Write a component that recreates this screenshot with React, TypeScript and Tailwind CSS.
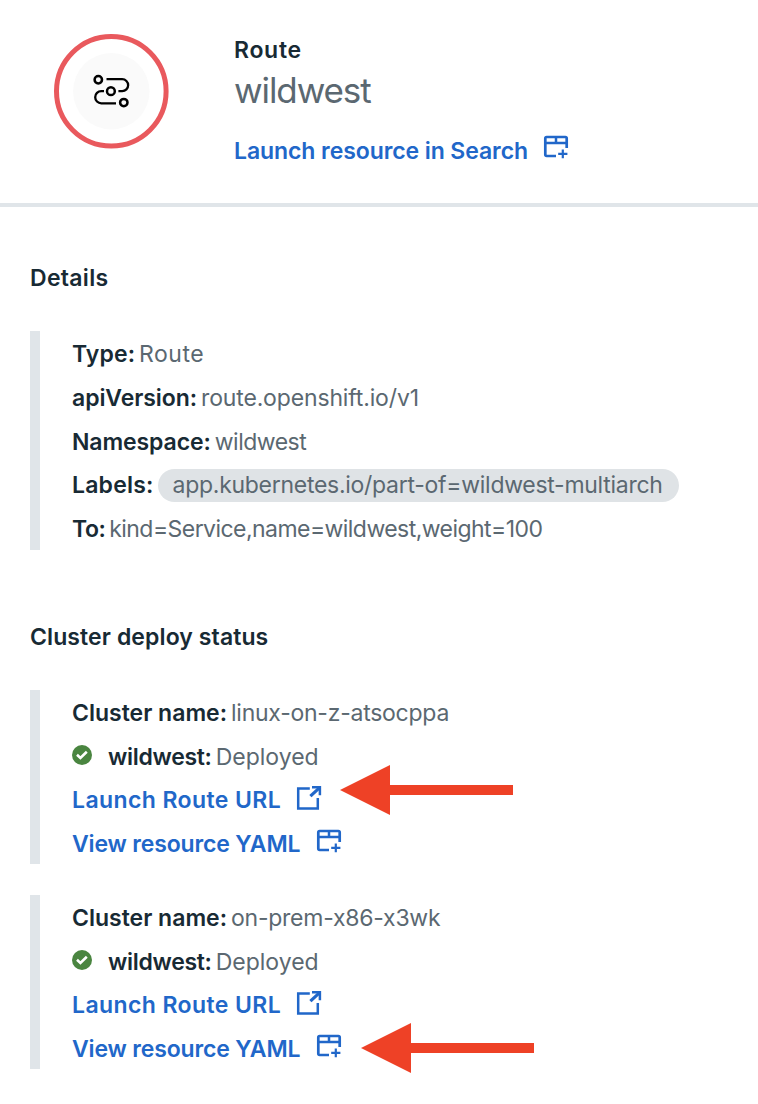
import type { ReactNode } from "react";

function RouteIcon() {
  return (
    <svg className="size-[115px]" viewBox="0 0 115 115" fill="none">
      <circle cx="57.3" cy="57.3" r="54.8" fill="#fff" stroke="#e9595d" strokeWidth="5" />
      <circle cx="57.3" cy="57.3" r="38.2" fill="#fafafa" />
      <g stroke="#000" strokeWidth="2.5">
        <circle cx="44.3" cy="45.7" r="3.7" />
        <circle cx="56.9" cy="57.2" r="3.9" />
        <circle cx="69.8" cy="68.6" r="3.7" />
        <path d="M52.5 45.2H68.2a5.9 5.9 0 0 1 0 11.9H64.4" strokeWidth="2.3" />
        <path d="M50 57.1H47.3a6.1 6.1 0 0 0 0 12.2H62" strokeWidth="2.3" />
      </g>
    </svg>
  );
}

function ResourceIcon() {
  return (
    <svg className="h-6 w-[26px] shrink-0" viewBox="0 0 26 24" fill="none" stroke="#2167c9">
      <path d="M23.7 12.9V3.4Q23.7 2 22.3 2H3.7Q2.3 2 2.3 3.4V19.6Q2.3 21 3.7 21H13" strokeWidth="2.7" />
      <path d="M2 7.9H24M13 2V7.9" strokeWidth="2.5" />
      <path d="M15.2 18.9H24.4M19.8 14.4V23.3" strokeWidth="2.2" />
    </svg>
  );
}

function LaunchIcon() {
  return (
    <svg className="h-[26px] w-[26px] shrink-0" viewBox="0 0 26 26" fill="none" stroke="#2167c9">
      <path d="M13.8 3.6H2.2V23.5H21.8V13" strokeWidth="2.5" />
      <path d="M16 2.3H23.9V10.2" strokeWidth="2.5" />
      <path d="M23.4 2.8L14.4 11.2" strokeWidth="3.2" />
    </svg>
  );
}

function CheckIcon() {
  return (
    <svg className="relative -top-[2px] mr-4 size-5 shrink-0" viewBox="0 0 20 20" fill="none">
      <circle cx="10" cy="10" r="10" fill="#4a8540" />
      <path d="M5 9.8L8.4 12.9L14.8 6.7" stroke="#fff" strokeWidth="2.6" />
    </svg>
  );
}

function Row({ children }: { children: ReactNode }) {
  return <div className="flex h-[43.7px] shrink-0 items-center">{children}</div>;
}

function Label({ className, children }: { className: string; children: ReactNode }) {
  return <span className={`mr-[4px] font-semibold text-[#182a34] ${className}`}>{children}</span>;
}

function Arrow() {
  return (
    <svg className="h-[50px] w-[173px]" viewBox="0 0 173 50" fill="#ee4126">
      <path d="M0 25L50 0V20H173V30H50V50Z" />
    </svg>
  );
}

function Cluster({ name, nameClass }: { name: string; nameClass: string }) {
  return (
    <section className="h-[173.5px] border-l-10 border-[#e0e5e9] pt-[1.3px] pl-8">
      <Row>
        <Label className="tracking-[0px]">Cluster name:</Label>
        <span className={nameClass}>{name}</span>
      </Row>
      <Row>
        <CheckIcon />
        <Label className="tracking-[-0.3px]">wildwest:</Label>
        <span className="tracking-[0px]">Deployed</span>
      </Row>
      <Row>
        <a className="flex items-center font-semibold text-[#2167c9]">
          <span className="w-[224px] tracking-[0.4px]">Launch Route URL</span>
          <span className="-mt-[6px]"><LaunchIcon /></span>
        </a>
      </Row>
      <Row>
        <a className="flex items-center font-semibold text-[#2167c9]">
          <span className="w-[244px] tracking-[-0.15px]">View resource YAML</span>
          <span className="-mt-[7px]"><ResourceIcon /></span>
        </a>
      </Row>
    </section>
  );
}

export default function App() {
  return (
    <main className="relative h-[1104px] w-[758px] overflow-hidden bg-white font-['Inter',sans-serif] text-[23px] whitespace-nowrap text-[#5b6871]">
      <header className="flex h-[207px] border-b-4 border-[#e0e5e9] pt-[34px] pl-[54px]">
        <div className="w-[180px]"><RouteIcon /></div>
        <div>
          <div className="h-8 leading-8 font-semibold tracking-[0.7px] text-[#182a34]">Route</div>
          <div className="h-[50px] text-[35px] leading-[48px] tracking-[-1.1px]">wildwest</div>
          <a className="mt-[19px] flex h-8 items-center font-semibold text-[#2167c9]">
            <span className="w-[309px] tracking-[-0.08px]">Launch resource in Search</span>
            <span className="-mt-[8px]"><ResourceIcon /></span>
          </a>
        </div>
      </header>
      <div className="px-[30px]">
        <h2 className="mt-[55px] h-8 leading-8 font-semibold tracking-[0.3px] text-[#182a34]">Details</h2>
        <section className="mt-[37px] h-[219px] border-l-10 border-[#e0e5e9] pt-[1.7px] pl-8">
          <Row>
            <Label className="tracking-[0.1px]">Type:</Label>
            <span className="tracking-[0.5px]">Route</span>
          </Row>
          <Row>
            <Label className="tracking-[-0.07px]">apiVersion:</Label>
            <span className="tracking-[-0.15px]">route.openshift.io/v1</span>
          </Row>
          <Row>
            <Label className="tracking-[-0.1px]">Namespace:</Label>
            <span className="tracking-[-0.5px]">wildwest</span>
          </Row>
          <Row>
            <Label className="tracking-[0.2px]">Labels:</Label>
            <span className="flex h-[33px] w-[521px] items-center rounded-full bg-[#dfe3e6] pl-[15px] tracking-[-0.28px]">
              app.kubernetes.io/part-of=wildwest-multiarch
            </span>
          </Row>
          <Row>
            <Label className="tracking-[-0.5px]">To:</Label>
            <span className="tracking-[-0.55px]">kind=Service,name=wildwest,weight=100</span>
          </Row>
        </section>
        <h2 className="mt-[71px] h-8 leading-8 font-semibold tracking-[0.1px] text-[#182a34]">Cluster deploy status</h2>
        <div className="mt-[37px] flex flex-col gap-[31.5px]">
          <Cluster name="linux-on-z-atsocppa" nameClass="tracking-[-0.25px]" />
          <Cluster name="on-prem-x86-x3wk" nameClass="tracking-[-0.25px]" />
        </div>
      </div>
      <div className="absolute top-[765px] left-[340px]"><Arrow /></div>
      <div className="absolute top-[1023px] left-[361px]"><Arrow /></div>
    </main>
  );
}
